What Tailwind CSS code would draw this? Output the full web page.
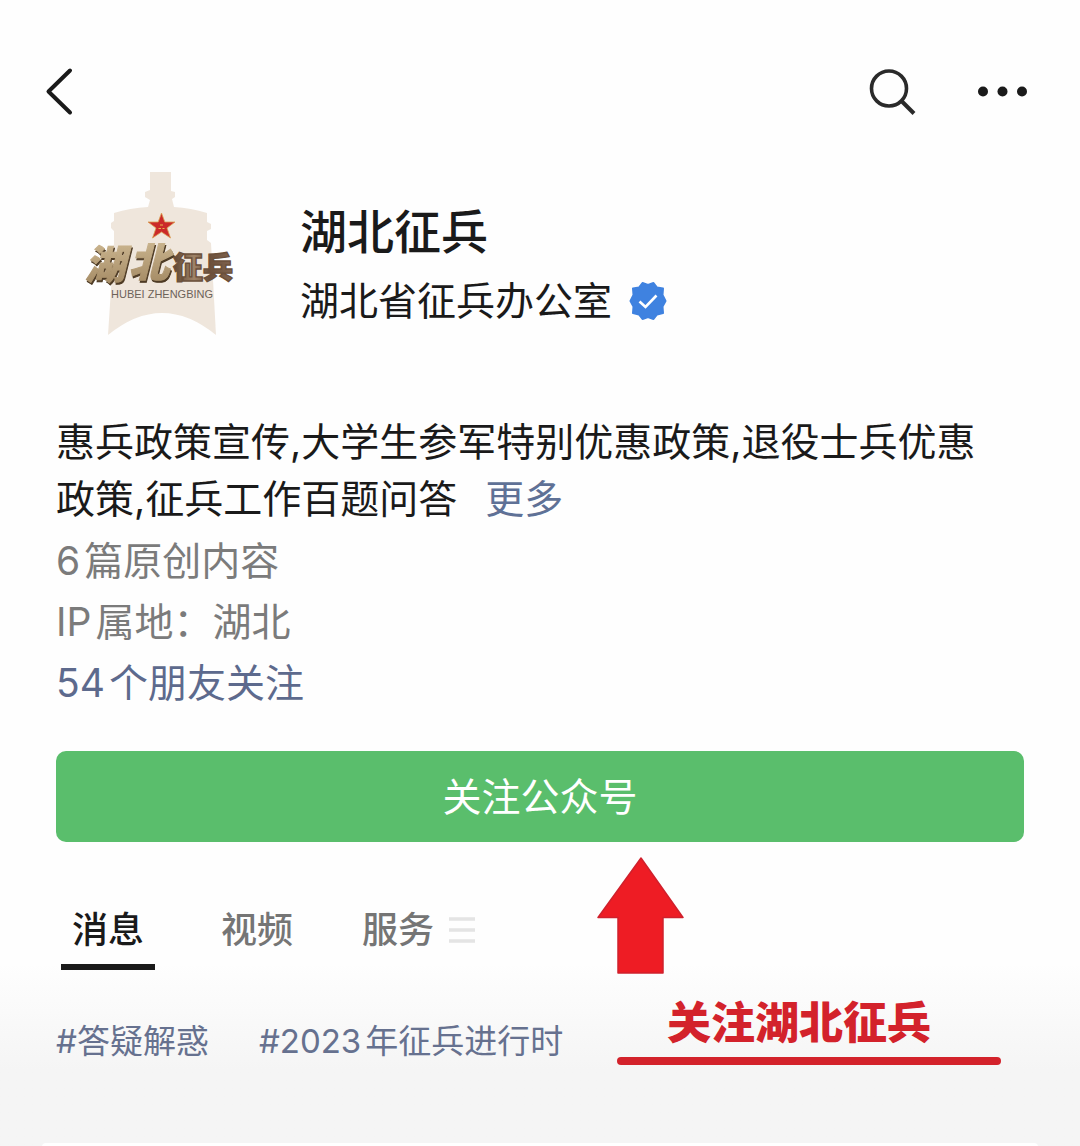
<!DOCTYPE html>
<html lang="zh-CN">
<head>
  <meta charset="UTF-8" />
  <meta name="viewport" content="width=device-width, initial-scale=1.0" />
  <title>湖北征兵</title>
  <script src="https://cdn.jsdelivr.net/npm/@tailwindcss/browser@4"></script>
</head>
<body class="bg-[#fefefe] min-h-screen flex flex-col text-[#1a1a1a] font-['Inter','Noto_Sans_CJK_SC',sans-serif]">
  <header class="flex items-center justify-between pl-[44px] pr-[50px] pt-[64px]">
    <button aria-label="返回" class="block">
      <svg class="w-8 h-14" viewBox="0 0 32 56" fill="none" stroke="#1a1a1a" stroke-width="4" stroke-linecap="round" stroke-linejoin="round">
        <path d="M26 6.500L4.500 27.500L26 48.500" />
      </svg>
    </button>
    <div class="flex items-center gap-[60px]">
      <button aria-label="搜索" class="block">
        <svg class="w-12 h-14" viewBox="0 0 48 56" fill="none" stroke="#2a2a2a" stroke-width="3.600">
          <circle cx="21" cy="24.500" r="17.500" />
          <path d="M33.500 37L46 49.500" stroke-width="4" />
        </svg>
      </button>
      <button aria-label="更多操作" class="block">
        <svg class="w-[54px] h-14" viewBox="0 0 54 56" fill="#1a1a1a">
          <circle cx="7" cy="27.500" r="5" />
          <circle cx="26.500" cy="27.500" r="5" />
          <circle cx="46" cy="27.500" r="5" />
        </svg>
      </button>
    </div>
  </header>

  <main class="flex-1 flex flex-col">
    <section class="flex items-start gap-[50px] pl-[70px] pr-14 pt-[40px]">
      <!-- logo -->
      <svg class="w-[180px] h-[190px] shrink-0" viewBox="0 0 180 190" role="img" aria-label="湖北征兵">
        <defs>
          <linearGradient id="gold" x1="0" y1="0" x2="0" y2="1">
            <stop offset="0" stop-color="#d2bd97" />
            <stop offset="1" stop-color="#a08660" />
          </linearGradient>
          <linearGradient id="bronze" x1="0" y1="0" x2="1" y2="0">
            <stop offset="0" stop-color="#5c4330" />
            <stop offset="0.350" stop-color="#a08468" />
            <stop offset="0.600" stop-color="#6b503b" />
            <stop offset="1" stop-color="#80644f" />
          </linearGradient>
        </defs>
        <path fill="#efe6dc" d="M80 12H101V31L105 32V37L102 39L104 47Q121 48 137 53V62L141 64V69L137 71V80L141 83L146 175Q92 131 38 175L44 83V71L41 68V63L44 61V53Q60 48 78 47L80 40L75 37V32L80 30Z" />
        <path fill="#cb2a2a" stroke="#d9a050" stroke-width="0.800" d="M91.500 53L94.800 62H105L97 68L100.500 78L91.500 72L82.500 78L86 68L78 62H88.200Z" />
        <path fill="none" stroke="#eab84c" stroke-width="1.200" d="M90 65H93M88.500 68.500H91M92.500 68.500H94.500" />
        <g fill="url(#gold)" stroke="url(#gold)" stroke-width="1" class="font-['Noto_Sans_CJK_SC',sans-serif] italic font-black text-[40px] drop-shadow-[1px_2px_0_#4d3a24]">
          <text x="15" y="119">湖</text>
          <text x="59" y="117">北</text>
        </g>
        <text x="103" y="118" fill="url(#bronze)" stroke="#6b503b" stroke-width="1.400" class="font-['Noto_Sans_CJK_SC',sans-serif] font-black text-[30px]">征兵</text>
        <text x="41" y="138" fill="#6d6259" class="font-['Liberation_Sans',sans-serif] text-[11px]">HUBEI ZHENGBING</text>
      </svg>
      <div class="pt-[40px]">
        <h1 class="text-[47px] leading-[64px] font-medium">湖北征兵</h1>
        <div class="flex items-center gap-4 mt-[7px]">
          <p class="text-[39px] leading-[60px]">湖北省征兵办公室</p>
          <svg class="w-10 h-10" viewBox="0 0 40 40" role="img" aria-label="已认证">
            <path fill="#3f82e0" stroke="#3f82e0" stroke-width="2" stroke-linejoin="round" d="M20 4L25.500 2L29 6.500L35 7.500L34.500 14L37.500 20L34.500 25.500L35 32L29 33.500L25.500 38L20 36L14.500 38L11 33.500L5 32L5.500 25.500L2.500 20L5.500 14L5 7.500L11 6.500L14.500 2Z" />
            <path fill="none" stroke="#fff" stroke-width="2.600" d="M11.500 20.500L17.500 26L28.500 14.500" />
          </svg>
        </div>
      </div>
    </section>

    <section class="px-14 pt-[63px]">
      <p class="pr-6 text-[39px] leading-[57px]">惠兵政策宣传,大学生参军特别优惠政策,退役士兵优惠政策,征兵工作百题问答<a href="#" class="ml-7 text-[#5f7196]">更多</a></p>
      <div class="text-[39px] leading-[61px] mt-[3px] text-[#7b7b7b]">
        <p class="flex gap-1"><span>6</span><span>篇原创内容</span></p>
        <p class="flex gap-1"><span>IP</span><span>属地：湖北</span></p>
        <a href="#" class="flex gap-1 text-[#5d6a8d]"><span>54</span><span>个朋友关注</span></a>
      </div>
      <button class="mt-[38px] block w-full h-[91px] rounded-[10px] bg-[#5abe6c] text-white text-[39px] leading-none">关注公众号</button>
    </section>

    <section class="relative flex-1 flex flex-col bg-linear-to-b from-[#fefefe] from-40% to-[#f5f5f5] to-75%">
      <nav class="flex items-center pl-[61px] pt-[54px] text-[36px] leading-[68px] font-medium">
        <button class="w-[94px] border-b-6 border-[#1a1a1a]">消息</button>
        <button class="ml-[66px] pb-[6px] text-[#757575]">视频</button>
        <button class="ml-[69px] pb-[6px] flex items-center gap-[15px] text-[#757575]">服务
          <svg class="w-[26px] h-7" viewBox="0 0 26 28" stroke="#e4e4e4" stroke-width="3.500">
            <path d="M0 3H26M0 14H26M0 25H26" />
          </svg>
        </button>
      </nav>
      <div class="flex gap-[50px] px-14 pt-[43px] pb-[74px] text-[33px] leading-[56px] text-[#66718f]">
        <a href="#">#答疑解惑</a>
        <a href="#" class="flex gap-1"><span>#2023</span><span>年征兵进行时</span></a>
      </div>
      <div class="mt-auto mx-[42px] h-1 rounded-t-full bg-white"></div>

      <!-- red pointer and caption over the tabs -->
      <div class="absolute left-[597px] top-[15px] text-[#d3222b]">
        <svg class="w-[87px] h-[118px]" viewBox="0 0 87 118">
          <path fill="#ee1c24" stroke="#d0202c" stroke-width="1.500" stroke-linejoin="round" d="M44 1L86 60.500H66V116H21V60.500H1Z" />
        </svg>
        <div class="ml-5 mt-[14px] w-[384px] text-center">
          <p class="pr-5 text-[44px] leading-[68px] font-black">关注湖北征兵</p>
          <div class="h-2 rounded-full bg-[#d3222b]"></div>
        </div>
      </div>
    </section>
  </main>
</body>
</html>
